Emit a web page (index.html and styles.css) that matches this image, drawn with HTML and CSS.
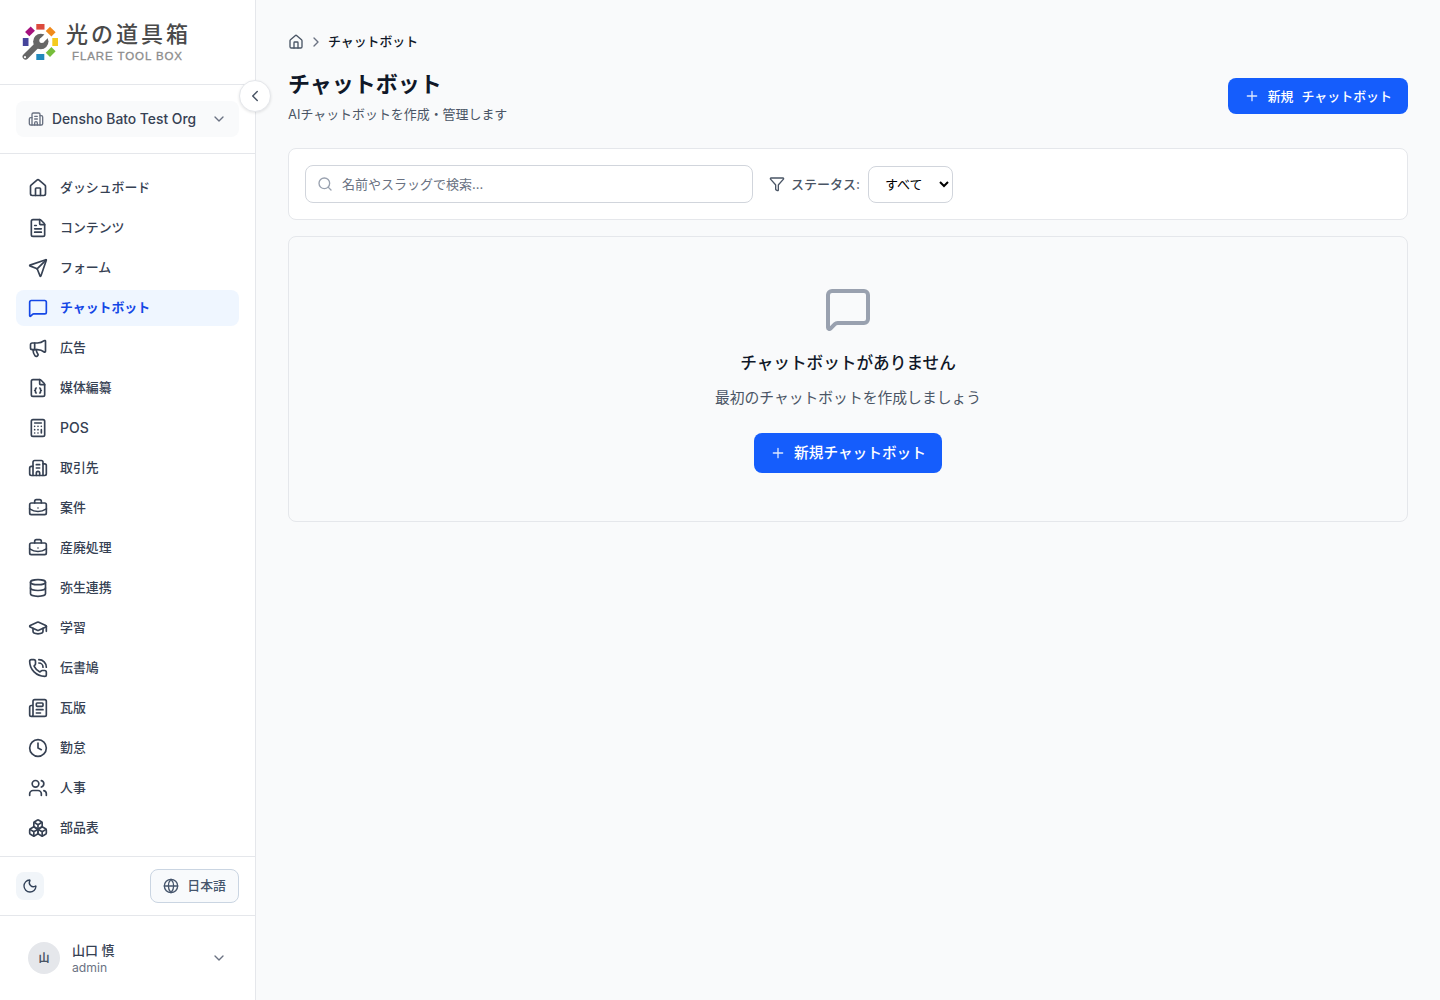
FILE: index.html
```
<!DOCTYPE html>
<html lang="ja">
<head>
    <meta charset="UTF-8">
    <title>チャットボット</title>
    <link rel="stylesheet" href="styles.css">
</head>
<body>
    <div class="layout">
        <aside class="sidebar">
            <div class="logo">
                <svg width="176" height="44" viewBox="0 0 176 44">
                    <!-- wrench -->
                    <circle cx="20.800" cy="21.500" r="7.700" fill="#666"/>
                    <path d="M21.800 20.600 28 14.400" stroke="#fff" stroke-width="5"/>
                    <circle cx="21.800" cy="20.600" r="2.500" fill="#fff"/>
                    <path d="M5.600 36.600 17.200 25" stroke="#666" stroke-width="6" stroke-linecap="round"/>
                    <circle cx="5" cy="37.200" r="1.100" fill="#fff"/>
                    <!-- colour ring -->
                    <rect x="16.300" y="4" width="8.200" height="5.600" fill="#dc4a3d"/>
                    <rect x="-4" y="-3" width="8" height="6" transform="translate(30.700 11.600) rotate(45)" fill="#f08a1c"/>
                    <rect x="32.300" y="18" width="5.700" height="8" fill="#f5cb1e"/>
                    <rect x="-4" y="-3" width="8" height="6" transform="translate(30.700 32) rotate(-45)" fill="#76bd3b"/>
                    <rect x="16.300" y="34" width="8" height="6" fill="#2289bd"/>
                    <rect x="2.800" y="18" width="5.700" height="8" fill="#45449b"/>
                    <rect x="-4" y="-3" width="8" height="6" transform="translate(10 11.400) rotate(-45)" fill="#a5127d"/>
                    <text class="logo-ja" x="46" y="22" textLength="122">光の道具箱</text>
                    <text class="logo-en" x="52" y="40" textLength="110">FLARE TOOL BOX</text>
                </svg>
            </div>
            <div class="org">
                <button class="org-button">
                    <svg class="icon icon-16" viewBox="0 0 24 24"><use href="#building"/></svg>
                    <span class="org-name">Densho Bato Test Org</span>
                    <svg class="icon icon-16" viewBox="0 0 24 24"><path d="m6 9 6 6 6-6"/></svg>
                </button>
            </div>
            <nav class="nav">
                <a class="nav-item"><svg class="icon" viewBox="0 0 24 24"><use href="#house"/></svg>ダッシュボード</a>
                <a class="nav-item"><svg class="icon" viewBox="0 0 24 24"><use href="#file"/><path d="M10 9H8M16 13H8M16 17H8"/></svg>コンテンツ</a>
                <a class="nav-item"><svg class="icon" viewBox="0 0 24 24"><path d="M14.536 21.686a.5.5 0 0 0 .937-.024l6.5-19a.496.496 0 0 0-.635-.635l-19 6.5a.5.5 0 0 0-.024.937l7.93 3.18a2 2 0 0 1 1.112 1.11z"/><path d="m21.854 2.147-10.94 10.939"/></svg>フォーム</a>
                <a class="nav-item active"><svg class="icon" viewBox="0 0 24 24"><use href="#message"/></svg>チャットボット</a>
                <a class="nav-item"><svg class="icon" viewBox="0 0 24 24"><path d="M11 6a13 13 0 0 0 8.400-2.800A1 1 0 0 1 21 4v12a1 1 0 0 1-1.600.8A13 13 0 0 0 11 14H5a2 2 0 0 1-2-2V8a2 2 0 0 1 2-2z"/><path d="M6 14a12 12 0 0 0 2.400 7.200 2 2 0 0 0 3.200-2.400A8 8 0 0 1 10 14"/><path d="M8 6v8"/></svg>広告</a>
                <a class="nav-item"><svg class="icon" viewBox="0 0 24 24"><use href="#file"/><path d="M10 12a1 1 0 0 0-1 1v1a1 1 0 0 1-1 1 1 1 0 0 1 1 1v1a1 1 0 0 0 1 1"/><path d="M14 18a1 1 0 0 0 1-1v-1a1 1 0 0 1 1-1 1 1 0 0 1-1-1v-1a1 1 0 0 0-1-1"/></svg>媒体編纂</a>
                <a class="nav-item latin"><svg class="icon" viewBox="0 0 24 24"><rect width="16" height="20" x="4" y="2" rx="2"/><path d="M8 6h8M16 14v4M16 10h.01M12 10h.01M8 10h.01M12 14h.01M8 14h.01M12 18h.01M8 18h.01"/></svg>POS</a>
                <a class="nav-item"><svg class="icon" viewBox="0 0 24 24"><use href="#building"/></svg>取引先</a>
                <a class="nav-item"><svg class="icon" viewBox="0 0 24 24"><use href="#briefcase"/></svg>案件</a>
                <a class="nav-item"><svg class="icon" viewBox="0 0 24 24"><use href="#briefcase"/></svg>産廃処理</a>
                <a class="nav-item"><svg class="icon" viewBox="0 0 24 24"><ellipse cx="12" cy="5" rx="9" ry="3"/><path d="M3 5V19A9 3 0 0 0 21 19V5"/><path d="M3 12A9 3 0 0 0 21 12"/></svg>弥生連携</a>
                <a class="nav-item"><svg class="icon" viewBox="0 0 24 24"><path d="M21.420 10.922a1 1 0 0 0-.019-1.838L12.830 5.180a2 2 0 0 0-1.660 0L2.600 9.080a1 1 0 0 0 0 1.832l8.570 3.908a2 2 0 0 0 1.660 0z"/><path d="M22 10v6"/><path d="M6 12.500V16a6 3 0 0 0 12 0v-3.500"/></svg>学習</a>
                <a class="nav-item"><svg class="icon" viewBox="0 0 24 24"><path d="M13 2a9 9 0 0 1 9 9"/><path d="M13 6a5 5 0 0 1 5 5"/><path d="M13.832 16.568a1 1 0 0 0 1.213-.303l.355-.465A2 2 0 0 1 17 15h3a2 2 0 0 1 2 2v3a2 2 0 0 1-2 2A18 18 0 0 1 2 4a2 2 0 0 1 2-2h3a2 2 0 0 1 2 2v3a2 2 0 0 1-.8 1.600l-.468.351a1 1 0 0 0-.292 1.233 14 14 0 0 0 6.392 6.384"/></svg>伝書鳩</a>
                <a class="nav-item"><svg class="icon" viewBox="0 0 24 24"><path d="M15 18h-5M18 14h-8"/><path d="M4 22h16a2 2 0 0 0 2-2V4a2 2 0 0 0-2-2H8a2 2 0 0 0-2 2v16a2 2 0 0 1-4 0v-9a2 2 0 0 1 2-2h2"/><rect width="8" height="4" x="10" y="6" rx="1"/></svg>瓦版</a>
                <a class="nav-item"><svg class="icon" viewBox="0 0 24 24"><circle cx="12" cy="12" r="10"/><path d="M12 6v6l4 2"/></svg>勤怠</a>
                <a class="nav-item"><svg class="icon" viewBox="0 0 24 24"><path d="M16 21v-2a4 4 0 0 0-4-4H6a4 4 0 0 0-4 4v2"/><path d="M16 3.128a4 4 0 0 1 0 7.744"/><path d="M22 21v-2a4 4 0 0 0-3-3.870"/><circle cx="9" cy="7" r="4"/></svg>人事</a>
                <a class="nav-item"><svg class="icon" viewBox="0 0 24 24"><path d="M2.970 12.920A2 2 0 0 0 2 14.630v3.240a2 2 0 0 0 .970 1.710l3 1.800a2 2 0 0 0 2.060 0L12 19v-5.500l-5-3-4.030 2.420Z"/><path d="m7 16.500-4.740-2.850M7 16.500l5-3M7 16.500v5.170"/><path d="M12 13.500V19l3.970 2.380a2 2 0 0 0 2.060 0l3-1.800a2 2 0 0 0 .970-1.710v-3.240a2 2 0 0 0-.970-1.710L17 10.500l-5 3Z"/><path d="m17 16.500-5-3M17 16.500l4.740-2.850M17 16.500v5.170"/><path d="M7.970 4.420A2 2 0 0 0 7 6.130v4.370l5 3 5-3V6.130a2 2 0 0 0-.970-1.710l-3-1.800a2 2 0 0 0-2.060 0l-3 1.800Z"/><path d="M12 8 7.260 5.150M12 8l4.740-2.850M12 13.500V8"/></svg>部品表</a>
            </nav>
            <div class="tools">
                <button class="theme-button">
                    <svg class="icon icon-16" viewBox="0 0 24 24"><path d="M20.985 12.486a9 9 0 1 1-9.473-9.472c.405-.022.617.460.402.803a6 6 0 0 0 8.268 8.268c.344-.215.825-.004.803.401"/></svg>
                </button>
                <button class="lang-button">
                    <svg class="icon icon-16" viewBox="0 0 24 24"><circle cx="12" cy="12" r="10"/><path d="M12 2a14.500 14.500 0 0 0 0 20 14.500 14.500 0 0 0 0-20"/><path d="M2 12h20"/></svg>
                    日本語
                </button>
            </div>
            <div class="user">
                <div class="avatar">山</div>
                <div class="user-info">
                    <div class="user-name">山口 慎</div>
                    <div class="user-role">admin</div>
                </div>
                <svg class="icon icon-16" viewBox="0 0 24 24"><path d="m6 9 6 6 6-6"/></svg>
            </div>
            <button class="collapse">
                <svg class="icon" viewBox="0 0 24 24"><path d="m15 18-6-6 6-6"/></svg>
            </button>
        </aside>

        <main class="main">
            <div class="breadcrumb">
                <svg class="icon icon-16" viewBox="0 0 24 24"><use href="#house"/></svg>
                <svg class="icon icon-16 separator" viewBox="0 0 24 24"><path d="m9 18 6-6-6-6"/></svg>
                <span>チャットボット</span>
            </div>
            <header class="page-header">
                <div>
                    <h1>チャットボット</h1>
                    <p>AIチャットボットを作成・管理します</p>
                </div>
                <button class="button">
                    <svg class="icon icon-16" viewBox="0 0 24 24"><path d="M5 12h14M12 5v14"/></svg>
                    <span class="button-label">新規<span class="button-noun">チャットボット</span></span>
                </button>
            </header>

            <section class="filters">
                <div class="search">
                    <svg class="icon icon-16" viewBox="0 0 24 24"><path d="m21 21-4.340-4.340"/><circle cx="11" cy="11" r="8"/></svg>
                    <input type="text" placeholder="名前やスラッグで検索...">
                </div>
                <label class="status-label" for="status">
                    <svg class="icon icon-16" viewBox="0 0 24 24"><path d="M10 20a1 1 0 0 0 .553.895l2 1A1 1 0 0 0 14 21v-7a2 2 0 0 1 .517-1.341L21.740 4.670A1 1 0 0 0 21 3H3a1 1 0 0 0-.742 1.670l7.225 7.989A2 2 0 0 1 10 14z"/></svg>
                    ステータス:
                </label>
                <select class="status-select" id="status">
                    <option>すべて</option>
                </select>
            </section>

            <section class="empty">
                <svg class="icon icon-48" viewBox="0 0 24 24"><use href="#message"/></svg>
                <h2>チャットボットがありません</h2>
                <p>最初のチャットボットを作成しましょう</p>
                <button class="button button-large">
                    <svg class="icon icon-16" viewBox="0 0 24 24"><path d="M5 12h14M12 5v14"/></svg>
                    <span>新規チャットボット</span>
                </button>
            </section>
        </main>
    </div>

    <!-- shared icons -->
    <svg class="sprite">
        <symbol id="house" viewBox="0 0 24 24"><path d="M15 21v-8a1 1 0 0 0-1-1h-4a1 1 0 0 0-1 1v8"/><path d="M3 10a2 2 0 0 1 .709-1.528l7-5.999a2 2 0 0 1 2.582 0l7 5.999A2 2 0 0 1 21 10v9a2 2 0 0 1-2 2H5a2 2 0 0 1-2-2z"/></symbol>
        <symbol id="file" viewBox="0 0 24 24"><path d="M6 22a2 2 0 0 1-2-2V4a2 2 0 0 1 2-2h8a2.400 2.400 0 0 1 1.704.706l3.588 3.588A2.400 2.400 0 0 1 20 8v12a2 2 0 0 1-2 2z"/><path d="M14 2v5a1 1 0 0 0 1 1h5"/></symbol>
        <symbol id="message" viewBox="0 0 24 24"><path d="M22 17a2 2 0 0 1-2 2H6.828a2 2 0 0 0-1.414.586l-2.202 2.202A.71.71 0 0 1 2 21.286V5a2 2 0 0 1 2-2h16a2 2 0 0 1 2 2z"/></symbol>
        <symbol id="building" viewBox="0 0 24 24"><path d="M10 12h4M10 8h4"/><path d="M14 21v-3a2 2 0 0 0-4 0v3"/><path d="M6 10H4a2 2 0 0 0-2 2v7a2 2 0 0 0 2 2h16a2 2 0 0 0 2-2V9a2 2 0 0 0-2-2h-2"/><path d="M6 21V5a2 2 0 0 1 2-2h8a2 2 0 0 1 2 2v16"/></symbol>
        <symbol id="briefcase" viewBox="0 0 24 24"><path d="M12 12h.01"/><path d="M16 6V4a2 2 0 0 0-2-2h-4a2 2 0 0 0-2 2v2"/><path d="M22 13a18.150 18.150 0 0 1-20 0"/><rect width="20" height="14" x="2" y="6" rx="2"/></symbol>
    </svg>
</body>
</html>
```
FILE: styles.css
```
* {
    box-sizing: border-box;
}
body {
    margin: 0;
    font-family: Inter, "Noto Sans CJK JP", sans-serif;
    font-size: 13px;
    line-height: 20px;
    color: #101828;
    background-color: #f9fafb;
}
h1, h2, p {
    margin: 0;
}
button, input, select {
    font-family: inherit;
    font-size: 13px;
    line-height: 20px;
}
button {
    border: 0;
    padding: 0;
    color: inherit;
}
.sprite {
    display: none;
}
.icon {
    width: 20px;
    height: 20px;
    flex-shrink: 0;
    fill: none;
    stroke: currentColor;
    stroke-width: 2;
    stroke-linecap: round;
    stroke-linejoin: round;
}
.icon-16 {
    width: 16px;
    height: 16px;
}
.icon-48 {
    width: 48px;
    height: 48px;
}
.layout {
    display: flex;
    height: 1000px;
}

/* Sidebar */
.sidebar {
    position: relative;
    display: flex;
    flex-direction: column;
    width: 256px;
    flex-shrink: 0;
    background-color: #fff;
    border-right: 1px solid #e5e7eb;
    color: #364153;
}
.logo {
    height: 85px;
    padding: 20px;
    border-bottom: 1px solid #e5e7eb;
}
.logo svg {
    display: block;
    overflow: visible;
}
.logo-ja {
    font-family: "Noto Sans CJK JP", sans-serif;
    font-size: 22px;
    font-weight: 500;
    fill: #4a4a4a;
}
.logo-en {
    font-family: "Liberation Sans", sans-serif;
    font-size: 11.5px;
    fill: #8c8c8c;
    stroke: #8c8c8c;
    stroke-width: 0.3;
}
.org {
    padding: 16px;
    border-bottom: 1px solid #e5e7eb;
}
.org-button {
    display: flex;
    align-items: center;
    gap: 8px;
    width: 100%;
    height: 36px;
    padding: 0 12px;
    border-radius: 8px;
    background-color: #f9fafb;
}
.org-button .icon {
    color: #6a7282;
}
.org-name {
    flex: 1;
    text-align: left;
    font-size: 13.85px;
    font-weight: 500;
    white-space: nowrap;
}
.nav {
    display: flex;
    flex-direction: column;
    gap: 4px;
    flex: 1;
    min-height: 0;
    padding: 16px 16px 0;
    overflow: hidden;
}
.nav-item {
    display: flex;
    align-items: center;
    gap: 12px;
    flex-shrink: 0;
    height: 36px;
    padding: 0 12px;
    border-radius: 8px;
    font-size: 12.9px;
    font-weight: 500;
}
.nav-item.active {
    background-color: #eff6ff;
    color: #1447e6;
    font-weight: 700;
}
.nav-item.latin {
    font-size: 14px;
}
.tools {
    display: flex;
    align-items: center;
    justify-content: space-between;
    height: 59px;
    padding: 0 16px;
    border-top: 1px solid #e5e7eb;
    color: #314158;
}
.theme-button {
    display: flex;
    align-items: center;
    justify-content: center;
    width: 28px;
    height: 28px;
    border-radius: 8px;
    background-color: #f1f5f9;
}
.lang-button {
    display: flex;
    align-items: center;
    gap: 8px;
    height: 34px;
    padding: 0 12px;
    border: 1px solid #cad5e2;
    border-radius: 8px;
    background-color: #f8fafc;
    color: #45556c;
    font-size: 12.9px;
    font-weight: 500;
}
.user {
    display: flex;
    align-items: center;
    gap: 12px;
    height: 85px;
    padding: 0 28px;
    border-top: 1px solid #e5e7eb;
}
.user .icon {
    color: #6a7282;
}
.avatar {
    width: 32px;
    height: 32px;
    border-radius: 50%;
    background-color: #e5e7eb;
    font-size: 11px;
    line-height: 32px;
    font-weight: 700;
    text-align: center;
    color: #4a5565;
}
.user-info {
    flex: 1;
}
.user-name {
    line-height: 18px;
    font-weight: 500;
}
.user-role {
    font-size: 12.2px;
    line-height: 17px;
    color: #6a7282;
}
.collapse {
    position: absolute;
    top: 80px;
    right: -16px;
    display: flex;
    align-items: center;
    justify-content: center;
    width: 32px;
    height: 32px;
    border: 1px solid #e5e7eb;
    border-radius: 50%;
    background-color: #fff;
    box-shadow: 0 1px 3px rgba(0, 0, 0, 0.1);
    color: #4a5565;
}
.collapse .icon {
    width: 18px;
    height: 18px;
}

/* Main */
.main {
    flex: 1;
    padding: 32px;
}
.breadcrumb {
    display: flex;
    align-items: center;
    gap: 4px;
    height: 20px;
    font-size: 12.9px;
    font-weight: 500;
}
.breadcrumb .icon {
    color: #4a5565;
}
.breadcrumb .separator {
    color: #6a7282;
}
.page-header {
    display: flex;
    align-items: center;
    justify-content: space-between;
    height: 56px;
    margin: 16px 0 24px;
}
.page-header h1 {
    font-size: 22px;
    line-height: 32px;
    font-weight: 700;
}
.page-header p {
    margin-top: 4px;
    font-size: 12.95px;
    color: #4a5565;
}
.button {
    display: flex;
    align-items: center;
    gap: 8px;
    height: 36px;
    padding: 0 16px;
    border-radius: 8px;
    background-color: #155dfc;
    color: #fff;
    font-weight: 500;
}
.button .icon {
    opacity: 0.85;
}
.button-label {
    font-size: 12.95px;
}
.button-noun {
    margin-left: 8px;
}
.filters {
    display: flex;
    align-items: center;
    height: 72px;
    padding: 0 16px;
    border: 1px solid #e5e7eb;
    border-radius: 8px;
    background-color: #fff;
}
.search {
    display: flex;
    align-items: center;
    gap: 9px;
    width: 448px;
    height: 38px;
    margin-right: 16px;
    padding: 0 11px;
    border: 1px solid #d1d5dc;
    border-radius: 8px;
    color: #99a1af;
}
.search input {
    flex: 1;
    padding: 0 0 1px;
    border: 0;
    outline: 0;
    background: none;
}
.search input::placeholder {
    color: #6a7282;
}
.status-label {
    display: flex;
    align-items: center;
    gap: 6px;
    margin-right: 8px;
    font-weight: 500;
    color: #4a5565;
}
.status-select {
    width: 85px;
    height: 37px;
    padding: 0 0 0 12px;
    border: 1px solid #d1d5dc;
    border-radius: 8px;
    background-color: #fff;
    color: #000;
}
.empty {
    display: flex;
    flex-direction: column;
    align-items: center;
    height: 286px;
    margin-top: 16px;
    padding-top: 48px;
    border: 1px solid #e5e7eb;
    border-radius: 8px;
}
.empty > .icon {
    color: #99a1af;
}
.empty h2 {
    margin-top: 16px;
    font-size: 16.65px;
    line-height: 28px;
    font-weight: 500;
}
.empty p {
    margin: 9px 0 23px;
    font-size: 14.8px;
    line-height: 24px;
    color: #4a5565;
}
.button-large {
    height: 40px;
    font-size: 14.67px;
}
```
